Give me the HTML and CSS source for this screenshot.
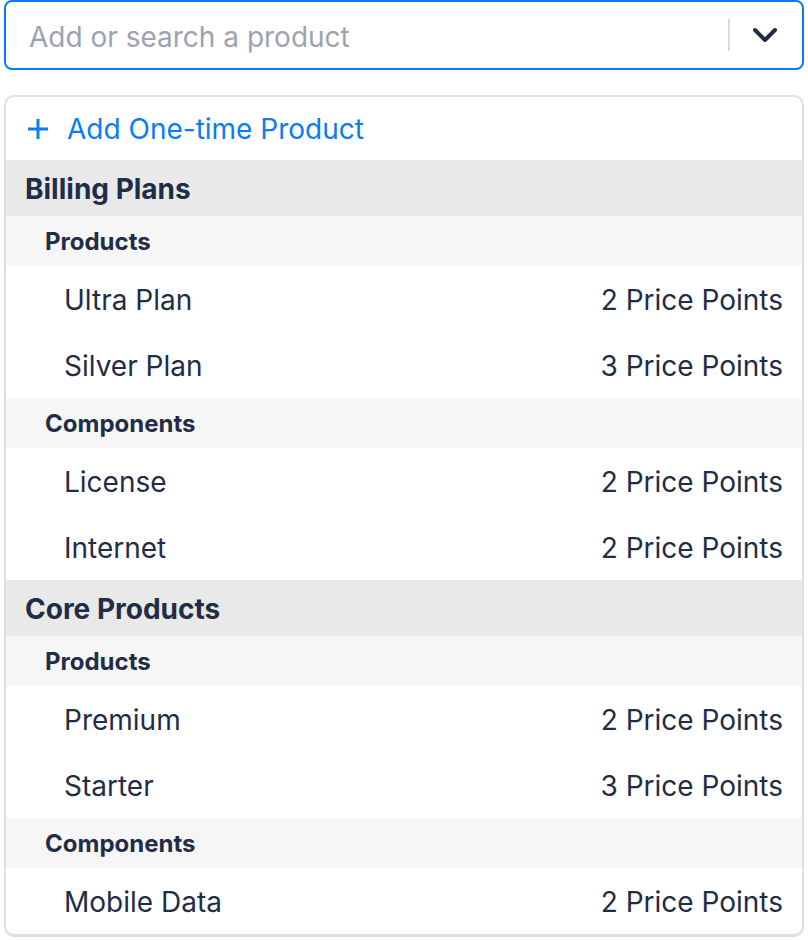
FILE: index.html
```html
<!DOCTYPE html>
<html>
<head>
<meta charset="utf-8">
<link rel="stylesheet" href="styles.css">
</head>
<body>
<div class="wrap">
  <div class="select">
    <span class="placeholder">Add or search a product</span>
    <span class="divider"></span>
    <svg class="chev" width="26" height="16" viewBox="0 0 26 16"><path d="M3 3 L13 13 L23 3" fill="none" stroke="#1f2d47" stroke-width="4" stroke-linecap="round" stroke-linejoin="round"/></svg>
  </div>
  <div class="menu">
    <div class="add">
      <svg class="plus" width="22" height="22" viewBox="0 0 22 22"><path d="M11 1 V21 M1 11 H21" stroke="#0a7cf5" stroke-width="3"/></svg>
      <span>Add One-time Product</span>
    </div>
    <div class="group">Billing Plans</div>
    <div class="sub">Products</div>
    <div class="item"><span>Ultra Plan</span><span>2 Price Points</span></div>
    <div class="item"><span>Silver Plan</span><span>3 Price Points</span></div>
    <div class="sub">Components</div>
    <div class="item"><span>License</span><span>2 Price Points</span></div>
    <div class="item"><span>Internet</span><span>2 Price Points</span></div>
    <div class="group">Core Products</div>
    <div class="sub">Products</div>
    <div class="item"><span>Premium</span><span>2 Price Points</span></div>
    <div class="item"><span>Starter</span><span>3 Price Points</span></div>
    <div class="sub">Components</div>
    <div class="item"><span>Mobile Data</span><span>2 Price Points</span></div>
  </div>
</div>
</body>
</html>
```
FILE: styles.css
```css
* { box-sizing: border-box; }
html, body { margin: 0; padding: 0; background: #fff; }
body { font-family: Inter, "Noto Sans", sans-serif; color: #1f2d47; }
.wrap { padding: 0 4px; width: 808px; }
.select {
  height: 70px;
  border: 2px solid #0a7cf5;
  border-radius: 8px;
  display: flex;
  align-items: center;
  padding: 0 24px 0 23px;
}
.placeholder { flex: 1; font-size: 28px; color: #9ca3af; padding-top: 3px; }
.divider { width: 2px; height: 32px; background: #d9dbe0; margin-right: 22px; }
.chev { display: block; }
.menu {
  margin-top: 25px;
  border: 2px solid #dcdfe5;
  border-bottom-width: 3px;
  border-radius: 10px;
  overflow: hidden;
}
.add {
  height: 63px;
  display: flex;
  align-items: center;
  padding-left: 21px;
  color: #0a7cf5;
  font-size: 28px;
  gap: 18px;
}
.group {
  height: 56px;
  display: flex;
  align-items: center;
  background: #e9e9ea;
  font-weight: 700;
  font-size: 28px;
  padding: 1px 0 0 19px;
}
.sub {
  height: 50px;
  display: flex;
  align-items: center;
  background: #f6f6f6;
  font-weight: 700;
  font-size: 24px;
  padding: 1px 0 0 39px;
}
.item {
  height: 66px;
  display: flex;
  align-items: center;
  justify-content: space-between;
  font-size: 28px;
  padding: 2px 19px 0 58px;
}
```
